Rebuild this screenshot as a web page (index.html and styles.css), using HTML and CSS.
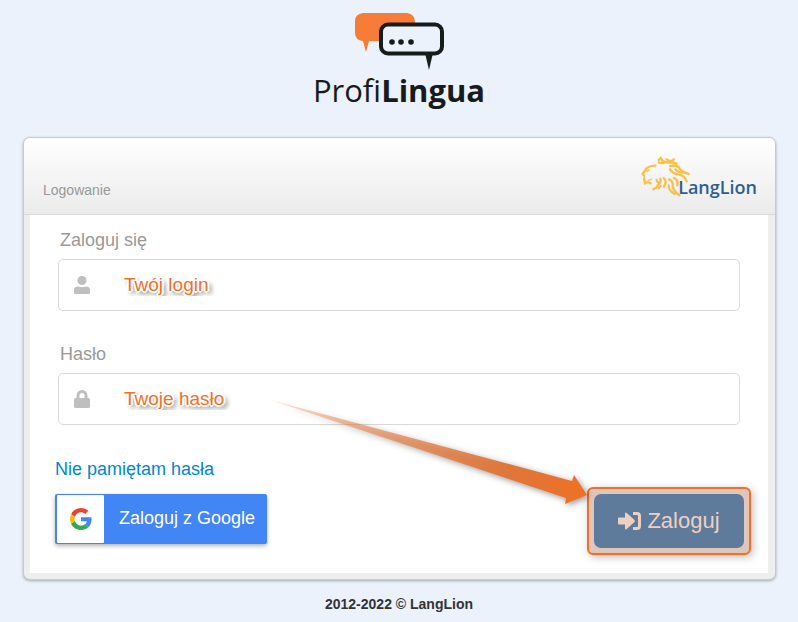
FILE: index.html
```
<!DOCTYPE html>
<html lang="pl">

<head>
  <meta charset="UTF-8">
  <meta name="viewport" content="width=device-width, initial-scale=1">
  <title>Logowanie - ProfiLingua</title>
  <link rel="stylesheet" href="styles.css">
</head>

<body>
  <header class="logo">
    <svg class="logo-icon" width="90" height="58" viewBox="0 0 90 58" aria-hidden="true">
      <path fill="#f67c37" d="M9 0H53Q61 1 61 9V28H15L12 39L9 28Q1 27 1 20V8Q1 1 9 0Z" />
      <rect x="27" y="11.5" width="61" height="29" rx="7" fill="#ebf2fb" stroke="#161b1c" stroke-width="4" />
      <path fill="#161b1c" d="M71 40H79L75 57Z" />
      <circle cx="38" cy="29" r="2.8" fill="#161b1c" />
      <circle cx="47" cy="29" r="2.8" fill="#161b1c" />
      <circle cx="57" cy="29" r="2.8" fill="#161b1c" />
    </svg>
    <div class="logo-name">Profi<b>Lingua</b></div>
  </header>

  <main class="box">
    <div class="box-header">
      <h1>Logowanie</h1>
      <div class="langlion">
        <svg class="lion" width="50" height="43" viewBox="60 78 150 129" fill="none" stroke="#f8c14a" stroke-width="7" stroke-linecap="round" aria-hidden="true">
          <!-- face -->
          <path d="M106 107Q82 108 76 120L68 132L73 138M72 145L75 160Q84 154 92 160" />
          <path stroke-width="4" d="M76 124L88 120M84 152L94 147" />
          <!-- mane -->
          <path d="M116 90L122 84Q126 94 136 96M117 97Q126 102 138 96" />
          <path d="M140 88Q152 98 162 88M142 98Q158 96 170 101" />
          <path d="M150 108Q174 102 180 118Q190 128 206 132" />
          <path d="M150 118Q158 132 178 134Q194 138 200 154" />
          <path d="M166 118Q174 128 188 128" />
          <path d="M100 178Q112 172 114 164Q124 158 121 146M110 150Q112 160 122 156" />
          <path d="M131 144Q142 154 132 170M122 168L116 174" />
          <path d="M148 148Q160 154 158 168Q160 184 178 196" />
          <path d="M146 166Q146 184 164 192M162 144Q176 150 172 166" />
        </svg>
        <span>LangLion</span>
      </div>
    </div>

    <form class="box-body">
      <label for="login">Zaloguj się</label>
      <div class="field">
        <svg width="16" height="18" viewBox="0 0 16 18" fill="#bfbfbf" aria-hidden="true">
          <circle cx="8" cy="4.5" r="4.5" />
          <path d="M0 16.5V14Q0 10.5 4 10.5Q8 12 12 10.5Q16 10.5 16 14V16.5Q16 18 14.5 18H1.5Q0 18 0 16.5Z" />
        </svg>
        <input type="text" id="login" placeholder="Twój login">
      </div>

      <label for="password">Hasło</label>
      <div class="field">
        <svg width="16" height="18" viewBox="0 0 16 18" aria-hidden="true">
          <path fill="none" stroke="#bfbfbf" stroke-width="3" d="M4 9V5.5a4 4 0 0 1 8 0V9" />
          <rect y="8" width="16" height="10" rx="1.5" fill="#bfbfbf" />
        </svg>
        <input type="password" id="password" placeholder="Twoje hasło">
      </div>

      <a class="forgot" href="#">Nie pamiętam hasła</a>

      <div class="actions">
        <button type="button" class="google">
          <span class="google-icon">
            <svg width="22" height="22" viewBox="0 0 48 48" aria-hidden="true">
              <path fill="#EA4335" d="M24 9.5c3.54 0 6.71 1.22 9.21 3.6l6.85-6.85C35.9 2.38 30.47 0 24 0 14.62 0 6.51 5.38 2.56 13.22l7.98 6.19C12.43 13.72 17.74 9.5 24 9.5z" />
              <path fill="#4285F4" d="M46.98 24.55c0-1.57-.15-3.09-.38-4.55H24v9.02h12.94c-.58 2.96-2.26 5.48-4.78 7.18l7.73 6c4.51-4.18 7.09-10.36 7.09-17.65z" />
              <path fill="#FBBC05" d="M10.53 28.59c-.48-1.45-.76-2.99-.76-4.59s.27-3.14.76-4.59l-7.98-6.19C.92 16.46 0 20.12 0 24c0 3.88.92 7.54 2.56 10.78l7.97-6.19z" />
              <path fill="#34A853" d="M24 48c6.48 0 11.93-2.13 15.89-5.81l-7.73-6c-2.15 1.45-4.92 2.3-8.16 2.3-6.26 0-11.57-4.22-13.47-9.91l-7.98 6.19C6.51 42.62 14.62 48 24 48z" />
            </svg>
          </span>
          <span class="google-text">Zaloguj z Google</span>
        </button>

        <div class="highlight">
          <button type="submit" class="submit">
            <svg width="24" height="18" viewBox="0 0 24 18" fill="#edd0c0" aria-hidden="true">
              <path d="M1 5.5H7V1.5Q7 0 8.5 .7L16.5 8Q17.3 9 16.5 10L8.5 17.3Q7 18 7 16.5V12.5H1Q0 12.5 0 11.5V6.5Q0 5.5 1 5.5Z" />
              <path d="M15 0H19Q23 0 23 4V14Q23 18 19 18H15V15H19Q20 15 20 14V4Q20 3 19 3H15Z" />
            </svg>
            Zaloguj
          </button>
          <svg class="arrow" width="330" height="120" viewBox="0 0 330 120" aria-hidden="true">
            <defs>
              <linearGradient id="fade" x1="0" y1="0" x2="1" y2="0">
                <stop offset="0" stop-color="#ee7128" stop-opacity=".15" />
                <stop offset=".3" stop-color="#e8854a" stop-opacity=".6" />
                <stop offset=".75" stop-color="#e0763a" />
                <stop offset="1" stop-color="#f07024" />
              </linearGradient>
            </defs>
            <path fill="url(#fade)" d="M10 5L315 87L317 81L330 101L308 110L309 104Z" />
          </svg>
        </div>
      </div>
    </form>
  </main>

  <footer>2012-2022 © LangLion</footer>
</body>

</html>
```
FILE: styles.css
```
* {
  box-sizing: border-box;
}

body {
  margin: 0;
  background-color: #ebf2fb;
  font-family: "Liberation Sans", Arial, sans-serif;
  color: #999;
}

.logo {
  display: flex;
  flex-direction: column;
  align-items: center;
  height: 137px;
  padding-top: 13px;
}

.logo-icon {
  flex: none;
}

.logo-name {
  font-family: "Open Sans", sans-serif;
  font-size: 31px;
  line-height: 38px;
  color: #161b1c;
}

.box {
  margin: 0 22px 0 23px;
  border: 1px solid #c3ccd5;
  border-radius: 7px;
  background-color: #eee;
  box-shadow: 0 1px 3px rgba(0, 0, 0, 0.3);
}

.box-header {
  display: flex;
  justify-content: space-between;
  height: 77px;
  padding: 18px 18px 0 19px;
  border-bottom: 1px solid #d9d9d9;
  border-radius: 6px 6px 0 0;
  background: linear-gradient(#fff, #ebebeb);
}

.box-header h1 {
  margin: 26px 0 0;
  font-size: 14px;
  font-weight: normal;
  line-height: 16px;
}

.langlion {
  display: flex;
  font-family: "Open Sans", sans-serif;
  font-size: 18px;
  font-weight: 600;
  color: #2b5f8f;
}

.langlion span {
  margin: 20px 0 0 -12px;
  line-height: 22px;
}

.box-body {
  margin: 0 7px 6px 6px;
  padding: 14px 28px 18px;
  background-color: #fff;
}

.box-body label {
  display: block;
  margin-left: 2px;
  font-size: 18px;
  line-height: 22px;
}

.field {
  display: flex;
  align-items: center;
  height: 52px;
  margin: 8px 0 32px;
  padding-left: 15px;
  border: 1px solid #d9d9d9;
  border-radius: 5px;
}

.field input {
  flex: 1;
  height: 50px;
  margin-left: 5px;
  padding: 0 29px;
  border: none;
  outline: none;
  background: none;
  font: 19px/40px "Liberation Sans", Arial, sans-serif;
}

.field input::placeholder {
  color: #ee7128;
  opacity: 1;
  line-height: 40px;
  text-shadow: 1px 1px #fff, -1px -1px #fff, 1px -1px #fff, -1px 1px #fff,
    2px 0 #fff, -2px 0 #fff, 0 2px #fff, 0 -2px #fff,
    3px 3px 5px rgba(0, 0, 0, 0.8);
}

.forgot {
  display: inline-block;
  margin: 1px 0 0 -3px;
  font-size: 18px;
  line-height: 22px;
  color: #0088cc;
  text-decoration: none;
}

.actions {
  display: flex;
  justify-content: space-between;
  align-items: flex-start;
  margin: 7px -11px 0 -3px;
}

.google {
  display: flex;
  width: 212px;
  height: 50px;
  margin-top: 7px;
  padding: 1px 1px 1px 2px;
  border: none;
  border-radius: 2px;
  background-color: #4285f4;
  box-shadow: 0 2px 4px rgba(0, 0, 0, 0.3);
  font: 18px "Liberation Sans", Arial, sans-serif;
  color: #fff;
}

.google-icon {
  display: flex;
  align-items: center;
  justify-content: center;
  width: 47px;
  height: 48px;
  border-radius: 1px;
  background-color: #fff;
}

.google-text {
  flex: 1;
  padding-left: 4px;
  line-height: 46px;
}

.highlight {
  position: relative;
  padding: 5px;
  border: 2px solid #ee7128;
  border-radius: 6px;
  background-color: #e0c6ba;
  box-shadow: 2px 2px 8px rgba(0, 0, 0, 0.25);
}

.submit {
  display: flex;
  align-items: center;
  justify-content: center;
  gap: 5px;
  width: 150px;
  height: 54px;
  border: none;
  border-radius: 7px;
  background-color: #5f7b9b;
  font: 22px "Liberation Sans", Arial, sans-serif;
  color: #edd0c0;
}

.arrow {
  position: absolute;
  right: 162px;
  bottom: 39px;
  filter: drop-shadow(2px 2px 3px rgba(0, 0, 0, 0.4));
}

footer {
  padding: 16px 0 10px;
  font-size: 14px;
  font-weight: bold;
  line-height: 16px;
  text-align: center;
  color: #333;
}
```
